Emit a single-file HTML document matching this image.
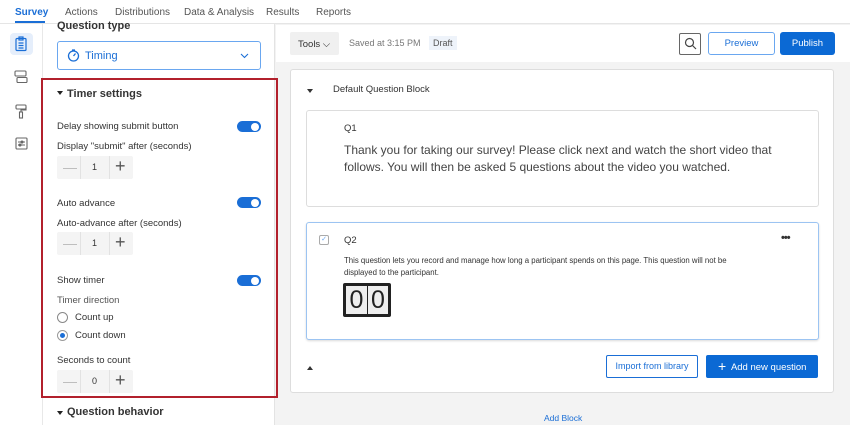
<!DOCTYPE html><html><head><style>
*{box-sizing:border-box;margin:0;padding:0}
body{width:850px;height:425px;overflow:hidden;font-family:"Liberation Sans",sans-serif;background:#f3f3f3;position:relative;color:#333}
.a{position:absolute}
.nav{left:0;top:0;width:850px;height:24px;background:#fff;border-bottom:1px solid #e5e5e5;font-size:10px;color:#555}
.nav span{position:absolute;top:7px}
.rail{left:0;top:24px;width:43px;height:401px;background:#fff;border-right:1px solid #e8e8e8}
.panel{left:43px;top:24px;width:232px;height:401px;background:#fff;border-right:1px solid #e3e3e3}
.lbl{font-size:9.5px;color:#333}
.tog{width:24px;height:11px;border-radius:6px;background:#1a6ed6}
.tog:after{content:"";position:absolute;right:2px;top:1.5px;width:8px;height:8px;border-radius:50%;background:#fff}
.step{width:76px;height:23px;background:#f4f4f4;border-radius:2px;font-size:9px}
.step i{position:absolute;top:0;height:23px;border-left:1px solid #e2e2e2}
.radio{width:11px;height:11px;border-radius:50%;border:1px solid #888;background:#fff}
.bx{background:#fff;border:1px solid #ddd;border-radius:3px}
</style></head><body>
<div class="a nav">
<span style="left:15px;color:#1a6ed6;font-weight:bold">Survey</span>
<div class="a" style="left:15px;top:21px;width:30px;height:2px;background:#1a6ed6"></div>
<span style="left:65px">Actions</span><span style="left:115px">Distributions</span><span style="left:184px">Data &amp; Analysis</span><span style="left:266px">Results</span><span style="left:316px">Reports</span>
</div>
<div class="a rail">
<div class="a" style="left:10px;top:9px;width:23px;height:22px;background:#e5eefb;border-radius:4px"></div>
<svg class="a" style="left:14px;top:12px" width="14" height="16" viewBox="0 0 14 16" fill="none" stroke="#1a6ed6" stroke-width="1.2"><rect x="2" y="2.5" width="10" height="12" rx="1"/><rect x="5" y="1" width="4" height="3"/><path d="M4.5 7h5M4.5 9.5h5M4.5 12h5"/></svg>
<svg class="a" style="left:14px;top:46px" width="14" height="14" viewBox="0 0 14 14" fill="none" stroke="#666" stroke-width="1.1"><rect x="1" y="1" width="11" height="5" rx="1"/><rect x="3" y="7.5" width="10" height="5" rx="1"/></svg>
<svg class="a" style="left:15px;top:80px" width="12" height="15" viewBox="0 0 12 15" fill="none" stroke="#666" stroke-width="1.1"><rect x="1" y="1" width="10" height="4" rx="1"/><path d="M11 3v3H6v2"/><rect x="4.5" y="8" width="3" height="6"/></svg>
<svg class="a" style="left:15px;top:113px" width="13" height="13" viewBox="0 0 13 13" fill="none" stroke="#666" stroke-width="1.1"><rect x="1" y="1" width="11" height="11" rx="1"/><path d="M3 5h7M3 8h7"/><circle cx="7" cy="5" r="1"/><circle cx="5" cy="8" r="1"/></svg>
</div>
<div class="a panel">
<div class="a" style="left:14px;top:-4px;font-size:11px;font-weight:bold;color:#333">Question type</div>
<div class="a" style="left:14px;top:17px;width:204px;height:29px;border:1px solid #6aa7f0;border-radius:3px;background:#fff"></div>
<svg class="a" style="left:24px;top:25px" width="13" height="13" viewBox="0 0 13 13" fill="none" stroke="#1a6ed6" stroke-width="1.3"><circle cx="6.5" cy="7" r="5"/><path d="M6.5 7l2-2.5M5 1h3"/></svg>
<div class="a" style="left:42px;top:26px;font-size:11px;color:#1a6ed6">Timing</div>
<svg class="a" style="left:197px;top:29px" width="9" height="6" viewBox="0 0 9 6" fill="none" stroke="#1a6ed6" stroke-width="1.1"><path d="M1 1l3.5 3.5L8 1"/></svg>
</div>
<div class="a" style="left:41px;top:78px;width:237px;height:320px;border:2px solid #b2202c"></div>
<div class="a" style="left:57px;top:91px;width:0;height:0;border-left:3.5px solid transparent;border-right:3.5px solid transparent;border-top:4px solid #222"></div>
<div class="a" style="left:67px;top:88px;font-size:11px;font-weight:bold;color:#333">Timer settings</div>
<div class="a lbl" style="left:57px;top:121px">Delay showing submit button</div>
<div class="a tog" style="left:237px;top:121px"></div>
<div class="a lbl" style="left:57px;top:141px">Display "submit" after (seconds)</div>
<div class="a step" style="left:57px;top:156px"><i style="left:23px"></i><i style="left:52px"></i><span class="a" style="left:6px;top:3px;color:#bbb;font-size:14px">—</span><span class="a" style="left:35px;top:6px">1</span><span class="a" style="left:58px;top:0px;font-size:18px;color:#555">+</span></div>
<div class="a lbl" style="left:57px;top:198px">Auto advance</div>
<div class="a tog" style="left:237px;top:197px"></div>
<div class="a lbl" style="left:57px;top:218px">Auto-advance after (seconds)</div>
<div class="a step" style="left:57px;top:232px"><i style="left:23px"></i><i style="left:52px"></i><span class="a" style="left:6px;top:3px;color:#bbb;font-size:14px">—</span><span class="a" style="left:35px;top:6px">1</span><span class="a" style="left:58px;top:0px;font-size:18px;color:#555">+</span></div>
<div class="a lbl" style="left:57px;top:275px">Show timer</div>
<div class="a tog" style="left:237px;top:275px"></div>
<div class="a lbl" style="left:57px;top:295px;color:#555">Timer direction</div>
<div class="a radio" style="left:57px;top:312px"></div>
<div class="a lbl" style="left:75px;top:312px">Count up</div>
<div class="a radio" style="left:57px;top:330px;border-color:#999"><div class="a" style="left:2px;top:2px;width:5px;height:5px;border-radius:50%;background:#1a6ed6"></div></div>
<div class="a lbl" style="left:75px;top:330px">Count down</div>
<div class="a lbl" style="left:57px;top:355px">Seconds to count</div>
<div class="a step" style="left:57px;top:370px"><i style="left:23px"></i><i style="left:52px"></i><span class="a" style="left:6px;top:3px;color:#bbb;font-size:14px">—</span><span class="a" style="left:35px;top:6px">0</span><span class="a" style="left:58px;top:0px;font-size:18px;color:#555">+</span></div>
<div class="a" style="left:57px;top:411px;width:0;height:0;border-left:3.5px solid transparent;border-right:3.5px solid transparent;border-top:4px solid #222"></div>
<div class="a" style="left:67px;top:406px;font-size:11px;font-weight:bold;color:#333">Question behavior</div>

<div class="a" style="left:276px;top:25px;width:574px;height:37px;background:#fff"></div>
<div class="a" style="left:290px;top:32px;width:49px;height:23px;background:#f0f0f0;border-radius:2px;font-size:9.5px;padding:7px 0 0 8px">Tools ⌵</div>
<div class="a" style="left:349px;top:38px;font-size:9px;color:#777">Saved at 3:15 PM</div>
<div class="a" style="left:429px;top:36px;width:28px;height:14px;background:#eef3fa;font-size:9px;color:#555;padding:2px 0 0 4px">Draft</div>
<div class="a" style="left:679px;top:33px;width:22px;height:22px;border:1px solid #666;border-radius:2px"></div>
<svg class="a" style="left:684px;top:37px" width="13" height="13" viewBox="0 0 13 13" fill="none" stroke="#444" stroke-width="1.2"><circle cx="5.5" cy="5.5" r="4"/><path d="M8.5 8.5l3.5 3.5"/></svg>
<div class="a" style="left:708px;top:32px;width:67px;height:23px;border:1px solid #6aa7f0;border-radius:3px;background:#fff;color:#1a6ed6;font-size:9.5px;text-align:center;line-height:21px">Preview</div>
<div class="a" style="left:780px;top:32px;width:55px;height:23px;border-radius:3px;background:#0b69d4;color:#fff;font-size:9.5px;text-align:center;line-height:23px">Publish</div>

<div class="a bx" style="left:290px;top:69px;width:544px;height:324px"></div>
<div class="a" style="left:307px;top:89px;width:0;height:0;border-left:3.5px solid transparent;border-right:3.5px solid transparent;border-top:4px solid #333"></div>
<div class="a" style="left:333px;top:84px;font-size:9.5px;color:#333">Default Question Block</div>
<div class="a bx" style="left:306px;top:110px;width:513px;height:97px"></div>
<div class="a" style="left:344px;top:123px;font-size:9.5px">Q1</div>
<div class="a" style="left:344px;top:142px;font-size:12px;color:#444;line-height:17px;width:450px">Thank you for taking our survey! Please click next and watch the short video that follows. You will then be asked 5 questions about the video you watched.</div>
<div class="a" style="left:306px;top:222px;width:513px;height:118px;background:#fff;border:1px solid #9cc4f2;border-radius:3px;box-shadow:0 1px 2px rgba(0,0,0,.15)"></div>
<div class="a" style="left:319px;top:235px;width:10px;height:10px;border:1px solid #aaa;border-radius:2px;font-size:7px;color:#6aa7f0;text-align:center;line-height:8px">✓</div>
<div class="a" style="left:344px;top:235px;font-size:9.5px">Q2</div>
<div class="a" style="left:781px;top:232px;font-size:11px;font-weight:bold;letter-spacing:-1px">•••</div>
<div class="a" style="left:344px;top:255px;font-size:7.8px;color:#333;line-height:12px;width:412px">This question lets you record and manage how long a participant spends on this page. This question will not be displayed to the participant.</div>
<div class="a" style="left:343px;top:283px;width:48px;height:34px;background:#222;border-radius:2px"></div>
<div class="a" style="left:346px;top:286px;width:21px;height:28px;background:#eee;font-size:25px;text-align:center;line-height:28px;color:#222">0</div>
<div class="a" style="left:368px;top:286px;width:20px;height:28px;background:#eee;font-size:25px;text-align:center;line-height:28px;color:#222">0</div>
<div class="a" style="left:307px;top:366px;width:0;height:0;border-left:3.5px solid transparent;border-right:3.5px solid transparent;border-bottom:4px solid #333"></div>
<div class="a" style="left:606px;top:355px;width:92px;height:23px;border:1px solid #1a6ed6;border-radius:2px;background:#fff;color:#1a6ed6;font-size:9px;text-align:center;line-height:21px">Import from library</div>
<div class="a" style="left:706px;top:355px;width:112px;height:23px;border-radius:2px;background:#0b69d4;color:#fff;font-size:9.5px;line-height:23px;padding-left:12px"><span style="font-size:14px;vertical-align:-1px">+</span>&nbsp; Add new question</div>
<div class="a" style="left:544px;top:413px;font-size:8.5px;color:#1a6ed6">Add Block</div>
</body></html>
